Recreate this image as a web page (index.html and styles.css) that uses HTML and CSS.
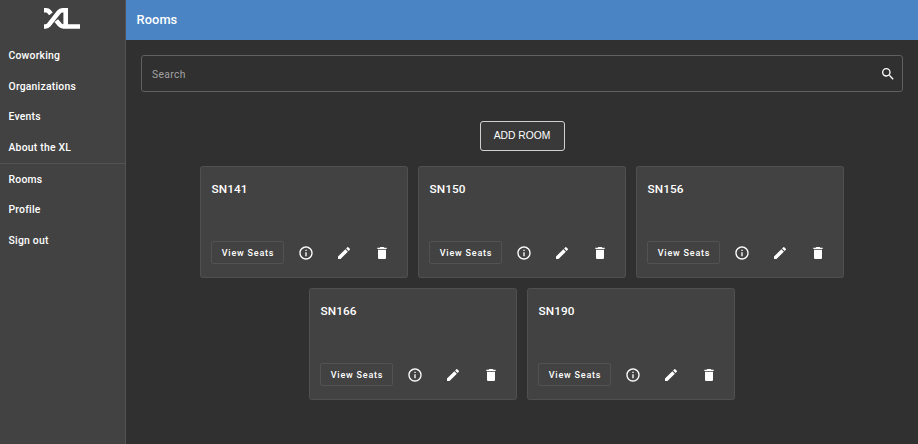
FILE: index.html
```html
<!DOCTYPE html>
<html lang="en">
<head>
<meta charset="utf-8">
<title>Rooms</title>
<link rel="stylesheet" href="styles.css">
</head>
<body>
<svg class="defs" aria-hidden="true">
  <symbol id="info" viewBox="0 0 24 24"><path d="M11 7h2v2h-2zm0 4h2v6h-2zm1-9C6.480 2 2 6.480 2 12s4.480 10 10 10 10-4.480 10-10S17.520 2 12 2zm0 18c-4.410 0-8-3.590-8-8s3.590-8 8-8 8 3.590 8 8-3.590 8-8 8z"/></symbol>
  <symbol id="edit" viewBox="0 0 24 24"><path d="M3 17.250V21h3.750L17.810 9.940l-3.750-3.750L3 17.250zM20.710 7.040a1 1 0 0 0 0-1.410l-2.340-2.340a1 1 0 0 0-1.410 0l-1.830 1.830 3.750 3.750 1.830-1.830z"/></symbol>
  <symbol id="trash" viewBox="0 0 24 24"><path d="M6 19c0 1.100.9 2 2 2h8c1.100 0 2-.9 2-2V7H6v12zM19 4h-3.500l-1-1h-5l-1 1H5v2h14V4z"/></symbol>
</svg>
<div class="app">
  <nav class="sidebar">
    <svg class="logo" viewBox="0 0 36 21">
      <path class="stroke" d="M0 2.300H2Q4 2.300 5.200 3.800L6.900 5.900M0 18.500H1.500Q3.500 18.500 4.800 16.900L14.800 4.200Q16.300 2.300 18.500 2.300H21.700V18.500H36M12.300 12.600L15.800 16.800Q17.300 18.500 19.500 18.500H23"/>
    </svg>
    <a class="link">Coworking</a>
    <a class="link">Organizations</a>
    <a class="link">Events</a>
    <a class="link">About the XL</a>
    <div class="divider"></div>
    <a class="link">Rooms</a>
    <a class="link">Profile</a>
    <a class="link">Sign out</a>
  </nav>
  <main class="main">
    <header class="toolbar">Rooms</header>
    <div class="search">
      <span>Search</span>
      <svg class="icon" viewBox="0 0 24 24"><path d="M15.500 14h-.79l-.28-.27A6.470 6.470 0 0 0 16 9.500 6.500 6.500 0 1 0 9.500 16c1.610 0 3.090-.59 4.230-1.570l.27.28v.79l5 4.990L20.490 19l-4.990-5zm-6 0a4.500 4.500 0 1 1 0-9 4.500 4.500 0 0 1 0 9z"/></svg>
    </div>
    <button class="add">ADD ROOM</button>
    <section class="rooms">
      <article class="card"><h2>SN141</h2><div class="actions"><button class="seats">View Seats</button><svg class="icon"><use href="#info"/></svg><svg class="icon"><use href="#edit"/></svg><svg class="icon"><use href="#trash"/></svg></div></article>
      <article class="card"><h2>SN150</h2><div class="actions"><button class="seats">View Seats</button><svg class="icon"><use href="#info"/></svg><svg class="icon"><use href="#edit"/></svg><svg class="icon"><use href="#trash"/></svg></div></article>
      <article class="card"><h2>SN156</h2><div class="actions"><button class="seats">View Seats</button><svg class="icon"><use href="#info"/></svg><svg class="icon"><use href="#edit"/></svg><svg class="icon"><use href="#trash"/></svg></div></article>
      <article class="card"><h2>SN166</h2><div class="actions"><button class="seats">View Seats</button><svg class="icon"><use href="#info"/></svg><svg class="icon"><use href="#edit"/></svg><svg class="icon"><use href="#trash"/></svg></div></article>
      <article class="card"><h2>SN190</h2><div class="actions"><button class="seats">View Seats</button><svg class="icon"><use href="#info"/></svg><svg class="icon"><use href="#edit"/></svg><svg class="icon"><use href="#trash"/></svg></div></article>
    </section>
  </main>
</div>
</body>
</html>
```
FILE: styles.css
```css
* { box-sizing: border-box; }
body {
  margin: 0;
  background: #303030;
  color: #fff;
  font-family: Roboto, sans-serif;
}
.defs { display: none; }
.app { display: flex; height: 444px; overflow: hidden; }
.sidebar {
  width: 126px;
  flex: none;
  display: flex;
  flex-direction: column;
  background: #424242;
  border-right: 1px solid #525252;
}
.logo {
  width: 36px;
  height: 21px;
  margin: 8px 0 11px 44px;
  flex: none;
}
.stroke { fill: none; stroke: #fff; stroke-width: 4.6; }
.link {
  height: 30.7px;
  line-height: 31px;
  padding-left: 8.5px;
  font-size: 10.4px;
  font-weight: 500;
  letter-spacing: 0.22px;
}
.divider { height: 1px; background: #525252; }
.main {
  flex: 1;
  display: flex;
  flex-direction: column;
  align-items: center;
}
.toolbar {
  width: 100%;
  height: 40px;
  padding-left: 10.5px;
  line-height: 40px;
  background: #4a84c4;
  font-size: 12.8px;
  font-weight: 500;
  letter-spacing: 0.1px;
}
.search {
  width: 762px;
  height: 37px;
  margin-top: 15px;
  padding: 0 6.5px 0 10px;
  display: flex;
  align-items: center;
  justify-content: space-between;
  border: 1px solid #606060;
  border-radius: 3px;
  color: #a3a3a3;
  font-size: 10.3px;
  letter-spacing: 0.35px;
}
.search span { padding-top: 1px; }
.icon { width: 16px; height: 16px; fill: #fff; flex: none; }
.add {
  width: 85px;
  height: 30px;
  margin: 29px 0 15px;
  padding: 0 0 1px;
  border: 1px solid #d0d0d0;
  border-radius: 3px;
  background: #393939;
  color: #fff;
  font: 10.3px "Liberation Sans", Arial, sans-serif;
}
.rooms {
  width: 660px;
  display: flex;
  flex-wrap: wrap;
  justify-content: center;
  gap: 10px;
}
.card {
  width: 208px;
  height: 112px;
  padding: 0 10px;
  background: #424242;
  border: 1px solid #505050;
  border-radius: 2.5px;
}
h2 {
  height: 16px;
  margin: 14px 0 44px;
  padding-left: 0.5px;
  line-height: 16px;
  font-size: 11.8px;
  font-weight: 500;
  letter-spacing: 0.1px;
}
.actions { display: flex; align-items: center; }
.seats {
  width: 73px;
  height: 23px;
  padding: 0 0 0 1px;
  border: 1px solid #525252;
  border-radius: 2px;
  background: transparent;
  color: #fff;
  font: 500 9px Roboto, sans-serif;
  letter-spacing: 0.8px;
}
.seats + .icon { margin-left: 14.3px; }
.icon + .icon { margin-left: 21.7px; }
```
